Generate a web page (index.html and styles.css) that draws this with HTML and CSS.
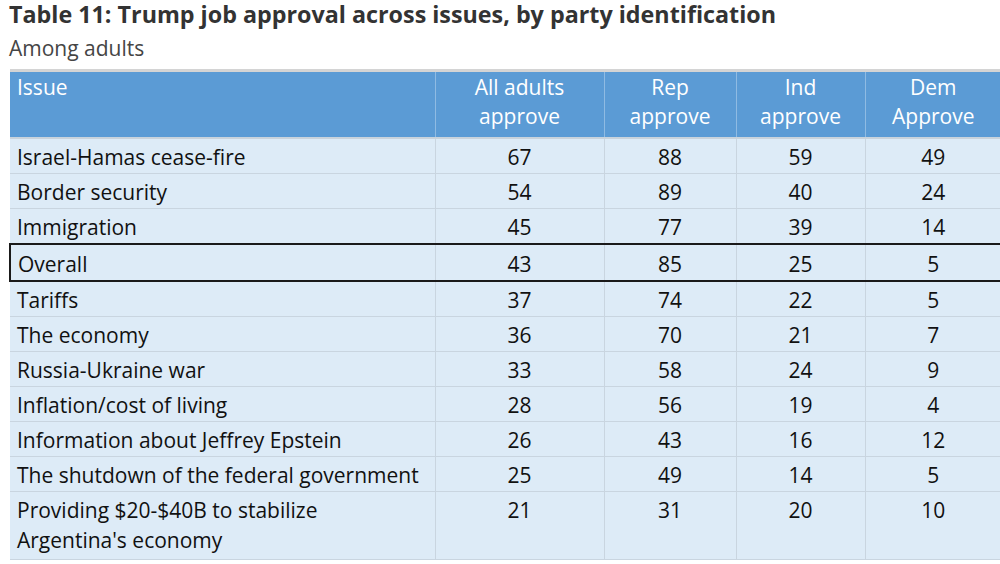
FILE: index.html
```html
<!DOCTYPE html>
<html>
<head>
<meta charset="utf-8">
<link rel="stylesheet" href="styles.css">
</head>
<body>
<div class="wrap">
  <h1 class="title"><span class="label">Table 11:</span> Trump job approval across issues, by party identification</h1>
  <p class="subtitle">Among adults</p>
  <table class="data">
    <colgroup>
      <col class="c-issue"><col class="c-all"><col class="c-rep"><col class="c-ind"><col class="c-dem">
    </colgroup>
    <thead>
      <tr>
        <th class="left">Issue</th>
        <th>All adults<br>approve</th>
        <th>Rep<br>approve</th>
        <th>Ind<br>approve</th>
        <th>Dem<br>Approve</th>
      </tr>
    </thead>
    <tbody>
      <tr><td class="left">Israel-Hamas cease-fire</td><td>67</td><td>88</td><td>59</td><td>49</td></tr>
      <tr><td class="left">Border security</td><td>54</td><td>89</td><td>40</td><td>24</td></tr>
      <tr><td class="left">Immigration</td><td>45</td><td>77</td><td>39</td><td>14</td></tr>
      <tr class="overall"><td class="left">Overall</td><td>43</td><td>85</td><td>25</td><td>5</td></tr>
      <tr><td class="left">Tariffs</td><td>37</td><td>74</td><td>22</td><td>5</td></tr>
      <tr><td class="left">The economy</td><td>36</td><td>70</td><td>21</td><td>7</td></tr>
      <tr><td class="left">Russia-Ukraine war</td><td>33</td><td>58</td><td>24</td><td>9</td></tr>
      <tr><td class="left">Inflation/cost of living</td><td>28</td><td>56</td><td>19</td><td>4</td></tr>
      <tr><td class="left">Information about Jeffrey Epstein</td><td>26</td><td>43</td><td>16</td><td>12</td></tr>
      <tr><td class="left">The shutdown of the federal government</td><td>25</td><td>49</td><td>14</td><td>5</td></tr>
      <tr class="tall"><td class="left">Providing $20-$40B to stabilize<br>Argentina's economy</td><td>21</td><td>31</td><td>20</td><td>10</td></tr>
    </tbody>
  </table>
</div>
</body>
</html>
```

FILE: styles.css
```css
html, body {
  margin: 0;
  padding: 0;
  background: #ffffff;
}
body {
  font-family: "Open Sans", "Noto Sans", sans-serif;
  color: #1a1a1a;
  overflow: hidden;
}
.wrap {
  padding: 0 0 0 9px;
}
.title {
  margin: 0;
  font-size: 23.3px;
  line-height: 28px;
  font-weight: 700;
  color: #333333;
}
.subtitle {
  margin: 7px 0 0 0;
  font-size: 21px;
  line-height: 26px;
  color: #454545;
}
.data {
  margin-top: 8px;
  border-collapse: collapse;
  table-layout: fixed;
  width: 991px;
  font-size: 21px;
  border-top: 3px solid #d4d4d4;
}
.c-issue { width: 425px; }
.c-all { width: 169px; }
.c-rep { width: 132px; }
.c-ind { width: 129px; }
.c-dem { width: 136px; }
.data th {
  background: #5b9bd5;
  color: #ffffff;
  font-weight: 400;
  line-height: 29px;
  padding: 1px 6px 6px 6px;
  text-align: center;
  vertical-align: top;
  border-left: 1px solid #8fbbe3;
  border-bottom: 2px solid #c9d3dc;
}
.data th:first-child { border-left: none; }
.data td {
  background: #ddebf7;
  color: #111111;
  line-height: 30px;
  padding: 2.5px 6px 1.5px 6px;
  text-align: center;
  vertical-align: top;
  border-left: 1px solid #c9d5e0;
  border-bottom: 1px solid #c9d5e0;
}
.data td:first-child { border-left: none; }
.data .left { text-align: left; padding-left: 7px; }
.data tr.tall td { height: 63px; }
.data tr.overall td {
  padding-top: 3.5px;
  border-top: 2px solid #1a1a1a;
  border-bottom: 2px solid #1a1a1a;
}
.data tr.overall td:first-child { border-left: 2px solid #1a1a1a; }
```
